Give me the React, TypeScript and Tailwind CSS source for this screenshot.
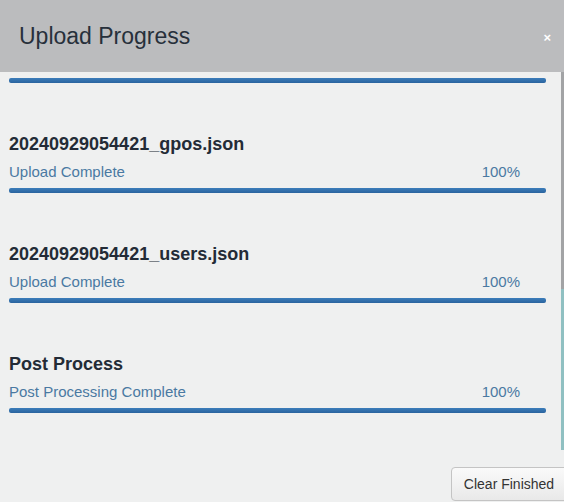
import React from 'react'

interface UploadItem {
  name: string;
  status: string;
  percent: number;
}

const items: UploadItem[] = [
  { name: '20240929054421_gpos.json', status: 'Upload Complete', percent: 100 },
  { name: '20240929054421_users.json', status: 'Upload Complete', percent: 100 },
  { name: 'Post Process', status: 'Post Processing Complete', percent: 100 },
]

const ProgressBar = ({ percent }: { percent: number }) => {
  return (
    <div className='h-[5px] w-full rounded-[2px] bg-[#dfe3e6] overflow-hidden'>
      <div
        className='h-full bg-gradient-to-b from-[#3c7dba] to-[#2a649f]'
        style={{ width: `${percent}%` }}
      />
    </div>
  )
}

const UploadRow = ({ item }: { item: UploadItem }) => {
  return (
    <div className='flex flex-col pt-[51px]'>
      <div className='h-[20px] leading-[20px] text-[18px] font-bold text-[#232b36]'>{item.name}</div>
      <div className='flex justify-between pr-[26px] mt-[9px] h-[18px] leading-[18px] text-[15px] text-[#4a79a2]'>
        <span>{item.status}</span>
        <span>{item.percent}%</span>
      </div>
      <div className='mt-[7px]'>
        <ProgressBar percent={item.percent} />
      </div>
    </div>
  )
}

export default function App() {
  return (
    <div
      className='w-[564px] h-[502px] overflow-hidden flex flex-col bg-[#eff0f0]'
      style={{ fontFamily: '"Liberation Sans", Arial, sans-serif' }}
    >
      <div className='h-[72px] shrink-0 flex items-center justify-between bg-[#bbbcbe] pl-[19px] pr-[13px]'>
        <h1 className='text-[23px] text-[#27303b] leading-none'>Upload Progress</h1>
        <button className='text-white text-[13px] font-bold leading-none mt-[3px]'>×</button>
      </div>
      <div className='h-[378px] shrink-0 flex'>
        <div className='flex-1 overflow-hidden pl-[9px] pr-[15px]'>
          <div className='mt-[6px]'>
            <ProgressBar percent={100} />
          </div>
          {items.map((item, index) => (
            <UploadRow key={index} item={item} />
          ))}
        </div>
        <div className='w-[3px] flex flex-col'>
          <div className='h-[217px] bg-[#a2a3a5]' />
          <div className='flex-1 bg-[#90c0c2]' />
        </div>
      </div>
      <div className='flex-1 flex items-start pt-[17px] pl-[451px]'>
        <button className='shrink-0 w-[118px] h-[34px] rounded-[4px] border border-[#c4c4c4] bg-gradient-to-b from-[#fafafa] to-[#e9e9e9] text-[14px] text-[#333] pr-[2px]'>
          Clear Finished
        </button>
      </div>
    </div>
  )
}
